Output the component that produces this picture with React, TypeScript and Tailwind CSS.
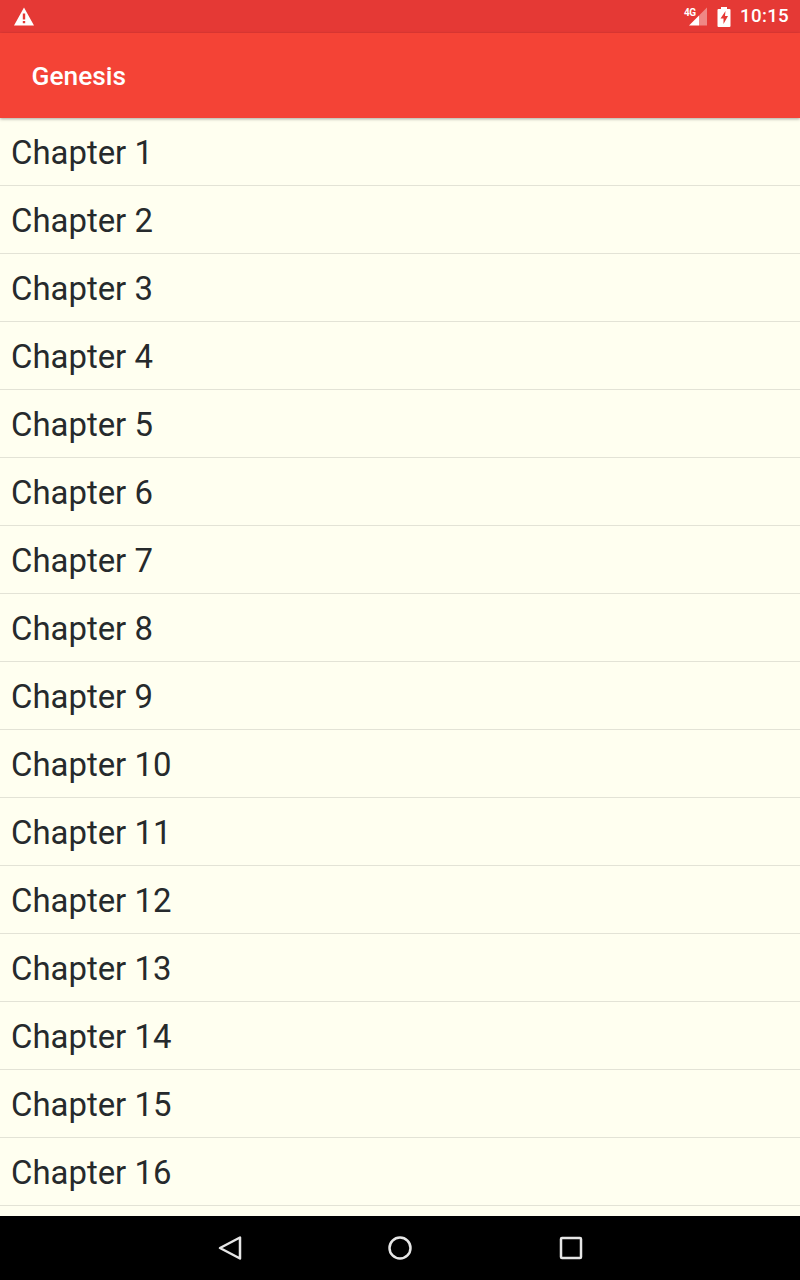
const chapters = Array.from({ length: 16 }, (_, i) => i + 1);

function StatusBar() {
  return (
    <div className="h-[33px] shrink-0 bg-[#e53935] flex items-center justify-between pl-[13px] pr-[11px] text-white">
      <svg width="22" height="20" viewBox="0 0 22 20" className="block">
        <path fillRule="evenodd" fill="#fff" d="M11 .5 21 18.500H1ZM9.800 6.500v6h2.400v-6Zm0 7.500v2.200h2.400V14Z" />
      </svg>
      <div className="flex items-center">
        <div className="relative w-[24px] h-[20px] mr-[9px]">
          <span className="absolute left-0 top-0 text-[10px] leading-[12px] font-bold tracking-[-0.5px]">4G</span>
          <svg width="24" height="20" viewBox="0 0 24 20" className="absolute left-0 top-0">
            <path fill="#fff" fillOpacity="0.4" d="M15 8.500 23 .5v18h-8Z" />
            <path fill="#fff" d="M5 18.500 15 8.500v10Z" />
          </svg>
        </div>
        <svg width="14" height="20" viewBox="0 0 14 20" className="block mr-[9px]">
          <path fillRule="evenodd" fill="#fff" d="M4 0h6v2h2.500a1 1 0 0 1 1 1v16a1 1 0 0 1-1 1H1.500a1 1 0 0 1-1-1V3a1 1 0 0 1 1-1H4ZM8.500 4 3.500 11.500h3V17l4.500-8H8Z" />
        </svg>
        <span className="text-[18.700px] leading-[33px] font-medium tracking-[0.3px]">10:15</span>
      </div>
    </div>
  );
}

function AppBar() {
  return (
    <div className="relative z-10 h-[85px] shrink-0 bg-[#f44336] flex items-center pl-[31.500px] pt-[2px] shadow-[0_1px_3px_rgba(0,0,0,0.35)]">
      <h1 className="text-[26.300px] font-medium text-white">Genesis</h1>
    </div>
  );
}

function NavBar() {
  return (
    <div className="h-[64px] shrink-0 bg-black flex items-center justify-center gap-[144px]">
      <svg width="26" height="26" viewBox="0 0 26 26" fill="none" stroke="#e6e6e6" strokeWidth="2.500" strokeLinejoin="round">
        <path d="M23 2.500v21L3 13Z" />
      </svg>
      <svg width="26" height="26" viewBox="0 0 26 26" fill="none" stroke="#e6e6e6" strokeWidth="2.500">
        <circle cx="13" cy="13" r="10.500" />
      </svg>
      <svg width="26" height="26" viewBox="0 0 26 26" fill="none" stroke="#e6e6e6" strokeWidth="2.500" strokeLinejoin="round">
        <rect x="4" y="3" width="20" height="20" rx="1" />
      </svg>
    </div>
  );
}

export default function App() {
  return (
    <div className="w-[800px] h-[1280px] flex flex-col overflow-hidden bg-[#fffff0] font-['Roboto',sans-serif]">
      <StatusBar />
      <AppBar />
      <div className="flex-1 overflow-hidden">
        {chapters.map((n) => (
          <div key={n} className="h-[68px] flex items-center pl-[11px] pt-[2px] border-b border-[#e3e3d6] text-[32.900px] text-[#262a2c]">
            Chapter {n}
          </div>
        ))}
      </div>
      <NavBar />
    </div>
  );
}
